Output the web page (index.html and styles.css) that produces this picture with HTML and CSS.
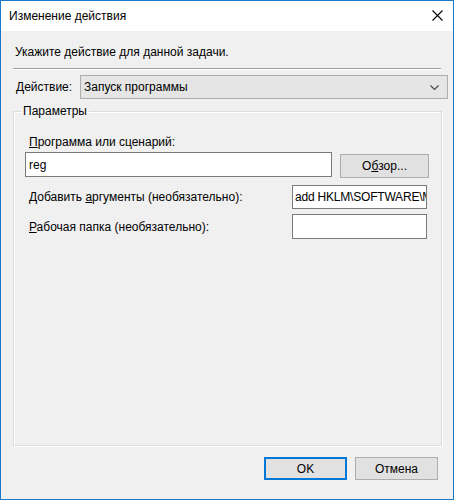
FILE: index.html
```html
<!DOCTYPE html>
<html lang="ru">
<head>
<meta charset="utf-8">
<title>Изменение действия</title>
<link rel="stylesheet" href="styles.css">
</head>
<body>
<div class="window">
  <div class="titlebar">
    <span class="title">Изменение действия</span>
    <svg class="close" width="11" height="11" viewBox="0 0 11 11"><path d="M0.5 0.5 L10.5 10.5 M10.5 0.5 L0.5 10.5" stroke="#000" stroke-width="1.1" fill="none"/></svg>
  </div>
  <div class="content">
    <div class="prompt">Укажите действие для данной задачи.</div>
    <div class="separator"></div>
    <div class="action-row">
      <span class="action-label"><u>Д</u>ействие:</span>
      <div class="select">
        <span>Запуск программы</span>
        <svg class="chevron" width="9" height="5" viewBox="0 0 9 5"><path d="M0.5 0.5 L4.5 4.5 L8.5 0.5" stroke="#444" stroke-width="1.1" fill="none"/></svg>
      </div>
    </div>
    <fieldset class="group">
      <legend>Параметры</legend>
      <div class="label first"><u>П</u>рограмма или сценарий:</div>
      <div class="program-row">
        <div class="input wide">reg</div>
        <div class="button browse">О<u>б</u>зор...</div>
      </div>
      <div class="field-row args">
        <span class="label">Добавить <u>а</u>ргументы (необязательно):</span>
        <div class="input small"><span class="clip">add HKLM\SOFTWARE\M</span></div>
      </div>
      <div class="field-row work">
        <span class="label"><u>Р</u>абочая папка (необязательно):</span>
        <div class="input small tall"></div>
      </div>
    </fieldset>
    <div class="footer">
      <div class="button ok">OK</div>
      <div class="button">Отмена</div>
    </div>
  </div>
</div>
</body>
</html>
```
FILE: styles.css
```css
html, body {
  margin: 0;
  padding: 0;
}
body {
  font-family: "Liberation Sans", Arial, sans-serif;
  font-size: 12px;
  line-height: 16px;
  color: #000;
}
.window {
  width: 454px;
  height: 500px;
  box-sizing: border-box;
  border: 1px solid #1c78c8;
  display: flex;
  flex-direction: column;
  background: #f0f0f0;
}
.titlebar {
  height: 30px;
  background: #fff;
  display: flex;
  align-items: center;
  justify-content: space-between;
  padding: 0 10px 0 8px;
  flex: none;
}
.title {
  font-size: 12px;
  margin-top: -1px;
}
.close {
  display: block;
  margin-top: -1px;
}
.content {
  flex: 1;
  display: flex;
  flex-direction: column;
  padding: 13px 0 0 12px;
}
.prompt {
  padding-left: 2px;
}
.separator {
  margin-top: 8px;
  width: 428px;
  border-top: 1px solid #a0a0a0;
  border-bottom: 1px solid #fff;
}
.action-row {
  margin-top: 5px;
  display: flex;
  align-items: center;
  height: 24px;
}
.action-label {
  padding-left: 3px;
  width: 64px;
}
.select {
  width: 368px;
  height: 24px;
  box-sizing: border-box;
  border: 1px solid #adadad;
  background: #e5e5e5;
  display: flex;
  align-items: center;
  justify-content: space-between;
  padding: 0 8px 0 3px;
}
.group {
  margin: 4px 0 0 0;
  width: 429px;
  box-sizing: border-box;
  border: 1px solid #dcdcdc;
  box-shadow: inset 1px 1px 0 #fff, 1px 1px 0 #fff;
  padding: 0 0 0 11px;
  flex: 1;
}
.group legend {
  margin-left: -4px;
  padding: 0 2px;
}
.label {
  padding-left: 4px;
}
.label.first {
  margin-top: 15px;
}
.program-row {
  margin-top: 2px;
  display: flex;
  align-items: flex-start;
  gap: 8px;
}
.input {
  height: 24px;
  box-sizing: border-box;
  border: 1px solid #7a7a7a;
  background: #fff;
  padding: 0 3px;
  display: flex;
  align-items: center;
  white-space: nowrap;
  overflow: hidden;
}
.input.wide {
  width: 307px;
  height: 25px;
}
.button {
  width: 83px;
  height: 23px;
  box-sizing: border-box;
  border: 1px solid #adadad;
  background: #e1e1e1;
  display: flex;
  align-items: center;
  justify-content: center;
}
.button.browse {
  width: 89px;
  height: 24px;
  margin-top: 2px;
}
.field-row {
  display: flex;
  align-items: center;
  justify-content: space-between;
  width: 402px;
}
.field-row.args {
  margin-top: 7px;
}
.field-row.work {
  margin-top: 5px;
}
.input.small {
  width: 135px;
  padding-left: 2px;
}
.clip {
  letter-spacing: -0.2px;
}
.input.tall {
  height: 25px;
}
.footer {
  display: flex;
  justify-content: flex-end;
  gap: 8px;
  padding: 11px 15px 19px 0;
}
.button.ok {
  border: 2px solid #0078d7;
}
```
